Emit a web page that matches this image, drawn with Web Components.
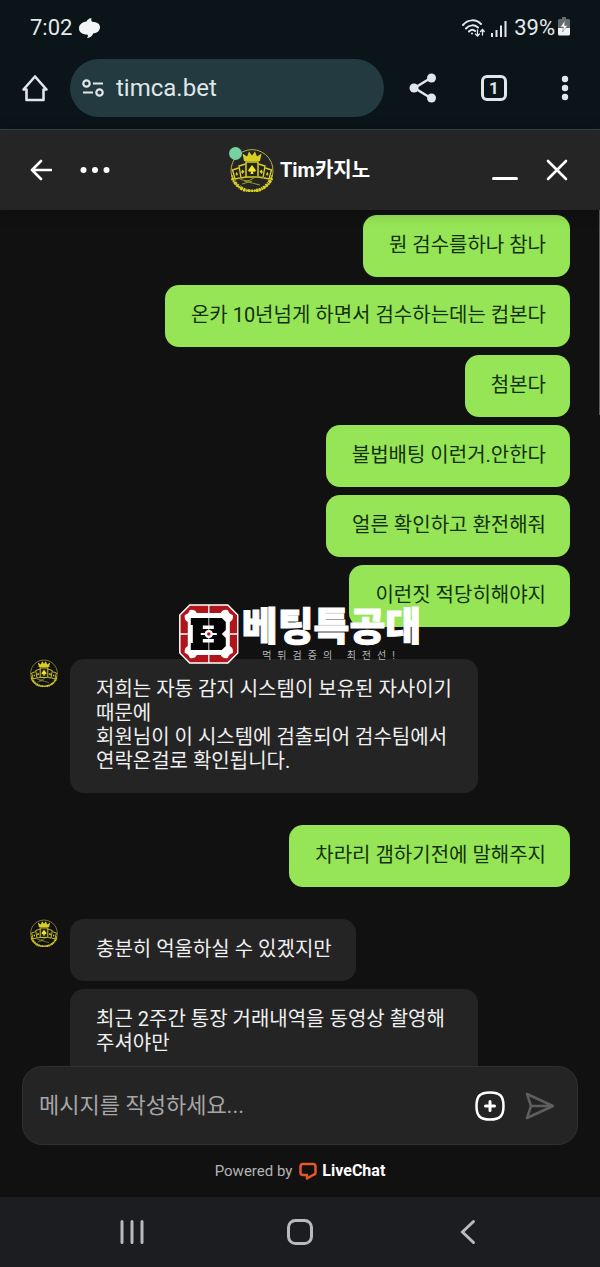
<!DOCTYPE html>
<html lang="ko">
<head>
<meta charset="utf-8">
<meta name="viewport" content="width=device-width, initial-scale=1">
<title>Tim카지노</title>
<style>
  body {
    margin: 0;
    background: #111111;
    font-family: Roboto, "Noto Sans CJK KR", sans-serif;
  }
</style>
</head>
<body>

<phone-screen>
  <status-bar slot="top" time="7:02" battery="39%"></status-bar>
  <browser-bar slot="top" url="timca.bet" tabs="1"></browser-bar>

  <chat-header slot="top">Tim카지노</chat-header>

  <chat-log>
    <chat-group from="me">
      <chat-bubble from="me">뭔 검수를하나 참나</chat-bubble>
      <chat-bubble from="me">온카 10년넘게 하면서 검수하는데는 컵본다</chat-bubble>
      <chat-bubble from="me">첨본다</chat-bubble>
      <chat-bubble from="me">불법배팅 이런거.안한다</chat-bubble>
      <chat-bubble from="me">얼른 확인하고 환전해줘</chat-bubble>
      <chat-bubble from="me">이런짓 적당히해야지</chat-bubble>
    </chat-group>
    <chat-group from="agent">
      <chat-bubble>저희는 자동 감지 시스템이 보유된 자사이기 때문에<br>회원님이 이 시스템에 검출되어 검수팀에서 연락온걸로 확인됩니다.</chat-bubble>
    </chat-group>
    <chat-group from="me">
      <chat-bubble from="me">차라리 갬하기전에 말해주지</chat-bubble>
    </chat-group>
    <chat-group from="agent">
      <chat-bubble>충분히 억울하실 수 있겠지만</chat-bubble>
      <chat-bubble>최근 2주간 통장 거래내역을 동영상 촬영해주셔야만<br>&nbsp;</chat-bubble>
    </chat-group>
    <site-stamp slot="overlay">
      베팅특공대
      <span slot="tagline">먹튀검증의 최전선!</span>
    </site-stamp>
  </chat-log>

  <chat-composer slot="bottom" placeholder="메시지를 작성하세요..."></chat-composer>
  <powered-by slot="bottom"></powered-by>
  <nav-bar slot="bottom"></nav-bar>
</phone-screen>

<script>
// shared bits for every icon button
const buttonCss = `
  button {
    display: flex;
    align-items: center;
    justify-content: center;
    padding: 0;
    border: 0;
    background: none;
    color: inherit;
    font: inherit;
  }
  svg { display: block; }
`

class BaseElement extends HTMLElement {
  constructor() {
    super();
    this.attachShadow({ mode: 'open' })
  }
  connectedCallback() {
    this.shadowRoot.innerHTML = this.tmpl()
  }
}

// column: bars on top, log in the middle, composer and nav below
class PhoneScreen extends BaseElement {
  tmpl() {
    return `
    <style>
      :host {
        display: flex;
        flex-direction: column;
        height: 100vh;
      }
      main {
        flex: 1;
        min-height: 0;
        display: flex;
      }
    </style>
    <slot name="top"></slot>
    <main><slot></slot></main>
    <slot name="bottom"></slot>
    `
  }
}

class StatusBar extends BaseElement {
  tmpl() {
    return `
    <style>
      :host {
        display: flex;
        justify-content: space-between;
        align-items: center;
        height: 56px;
        padding: 0 30px;
        background: #0b1418;
        color: #e3e9ea;
        font-size: 22px;
        line-height: 24px;
      }
      div {
        display: flex;
        align-items: center;
        gap: 7px;
      }
      .right { gap: 5px; }
      .battery { display: flex; gap: 3px; margin-left: 2px; }
      svg { display: block; }
    </style>
    <div>
      <span>${this.getAttribute('time')}</span>
      <svg width="21" height="20" viewBox="0 0 21 20" fill="#f4f6f6">
        <path d="M12.500 0C9.500 .5 8 2 7.500 3.500C3 4 0 6.500 0 10.500C0 14 3 16.500 8 16.500C9.500 17 9 19 8 20C11.500 19.500 13.500 18 14 15.500C18.500 15 21 12.500 21 9C21 6 18 4 13.500 3.800C12 3.500 12 1.500 12.500 0Z"/>
      </svg>
    </div>
    <div class="right">
      <svg width="23" height="18" viewBox="0 0 23 18" fill="none" stroke="#e3e9ea" stroke-width="2" stroke-linecap="round">
        <path d="M1 6C6 0 14 0 19 5M4 9.500C7.500 5.500 12.500 5.500 16 8.500M7 12.500C9 10.500 11.500 10.500 13 12"/>
        <circle cx="10" cy="14.500" r="1" fill="#e3e9ea" stroke="none"/>
        <path d="M15.500 11V16.500M13.500 15L15.500 17L17.500 15M20.500 16V11M18.500 12.500L20.500 10.500L22.200 12.500" stroke-width="1.300"/>
      </svg>
      <svg width="17" height="18" viewBox="0 0 17 18" stroke="#e3e9ea" stroke-width="2">
        <path d="M2 18V14M6.500 18V11M11 18V6.500M15.500 18V2"/>
      </svg>
      <span class="battery">
        <span>${this.getAttribute('battery')}</span>
        <svg width="12" height="20" viewBox="0 0 12 20">
          <path d="M4 1H8V3H10.500Q12 3 12 4.500V12H0V4.500Q0 3 1.500 3H4Z" fill="#646b6e"/>
          <path d="M0 12H12V18Q12 19.500 10.500 19.500H1.500Q0 19.500 0 18Z" fill="#f1f3f3"/>
          <path d="M7 4.500L2.500 11H5.500L4.500 16L9.500 9.500H6.500Z" fill="#fff" stroke="#646b6e" stroke-width=".5"/>
        </svg>
      </span>
    </div>
    `
  }
}

class BrowserBar extends BaseElement {
  tmpl() {
    return `
    <style>
      ${buttonCss}
      :host {
        display: flex;
        align-items: center;
        padding: 3px 20px 12px;
        border-bottom: 1px solid #38464a;
        background: #0b1418;
        color: #dfe7e8;
      }
      button { width: 30px; height: 30px; }
      .address {
        flex: 1;
        display: flex;
        align-items: center;
        gap: 12px;
        box-sizing: border-box;
        height: 58px;
        min-width: 0;
        margin: 0 24px 0 20px;
        padding: 0 12px;
        border-radius: 29px;
        background: #233a40;
      }
      input {
        flex: 1;
        min-width: 0;
        padding: 0;
        border: 0;
        outline: 0;
        background: none;
        color: #dfe7e8;
        font: 24px/32px Roboto, sans-serif;
      }
      .actions {
        display: flex;
        gap: 41px;
      }
      .tab {
        box-sizing: border-box;
        width: 26px;
        height: 26px;
        border: 3px solid #dfe7e8;
        border-radius: 6px;
        font-size: 17px;
        font-weight: 700;
        line-height: 20px;
      }
    </style>
    <button aria-label="Home">
      <svg width="28" height="28" viewBox="0 0 28 28" fill="none" stroke="currentColor" stroke-width="2.600" stroke-linejoin="round" stroke-linecap="round">
        <path d="M2.500 15.500L14 2.500L25.500 15.500H22.500V26H5.500V15.500Z"/>
      </svg>
    </button>
    <label class="address">
      <svg width="22" height="18" viewBox="0 0 22 18" fill="none" stroke="currentColor" stroke-width="2.200">
        <circle cx="4.500" cy="4.500" r="3.200"/>
        <circle cx="17.500" cy="13.500" r="3.200"/>
        <path d="M11 4.500H21M1 13.500H11"/>
      </svg>
      <input type="text" aria-label="Address" value="${this.getAttribute('url')}">
    </label>
    <div class="actions">
      <button aria-label="Share">
        <svg width="28" height="30" viewBox="0 0 28 30" fill="currentColor">
          <path d="M22.500 4.500L5.500 15L22.500 25.500" fill="none" stroke="currentColor" stroke-width="2.500"/>
          <circle cx="22.500" cy="5" r="4.500"/>
          <circle cx="5" cy="15" r="4.500"/>
          <circle cx="22.500" cy="25" r="4.500"/>
        </svg>
      </button>
      <button aria-label="Tabs"><span class="tab">${this.getAttribute('tabs')}</span></button>
      <button aria-label="Menu">
        <svg width="8" height="26" viewBox="0 0 8 26" fill="currentColor">
          <circle cx="4" cy="4" r="3.200"/>
          <circle cx="4" cy="13" r="3.200"/>
          <circle cx="4" cy="22" r="3.200"/>
        </svg>
      </button>
    </div>
    `
  }
}

// round casino emblem, sized by its host
class CasinoLogo extends BaseElement {
  tmpl() {
    return `
    <style>
      :host { display: block; }
      svg { display: block; width: 100%; height: 100%; }
    </style>
    <svg viewBox="0 0 44 44" fill="none" stroke="#d8cf25">
      <path d="M2 29A21 21 0 1 1 42 29" stroke-width="1" stroke="#b5b04c"/>
      <path d="M2.500 30A21 21 0 0 0 41.500 30" stroke-width="3.500" stroke-dasharray="2 1 1 .7 2.500 .8"/>
      <path d="M2 27A20 16 0 0 0 42 27" stroke-width="1.200"/>
      <path d="M14 13L12.500 5.500L17 8.500L19 3.500L22 7.500L25 3.500L27 8.500L31.500 5.500L30 13Z" fill="#d8cf25" stroke="none"/>
      <path d="M16 14H28V29H16Z" stroke-width="1.500" fill="#252518"/>
      <path d="M15.500 16L9 18L11 30L16 29M28.500 16L35 18L33 30L28 29M8.500 20L2.500 22L5 31L10 30M35.500 20L41.500 22L39 31L34 30" stroke-width="1.400"/>
      <path d="M22 17L26 22.500Q25 24.500 22.800 23.500L23.500 26H20.500L21.200 23.500Q19 24.500 18 22.500Z" fill="#f0e62a" stroke="none"/>
      <path d="M12.500 21.500L14.500 23.500L12.500 26L11 24ZM31.500 21.500L29.500 23.500L31.500 26L33 24ZM6.500 24L8 26L7 28L5.500 26ZM37.500 24L36 26L37 28L38.500 26Z" fill="#d8cf25" stroke="none"/>
      <path d="M8 30Q17 35 22 31T36 30M14 33L30 37M12 36L22 33" stroke-width="1" stroke="#9b9630"/>
    </svg>
    `
  }
}

class ChatHeader extends BaseElement {
  tmpl() {
    return `
    <style>
      ${buttonCss}
      :host {
        position: relative;
        z-index: 1;
        display: grid;
        grid-template-columns: 1fr auto 1fr;
        align-items: center;
        height: 80px;
        padding: 0 30px;
        background: #252525;
        color: #ffffff;
        box-shadow: 0 2px 14px rgba(0, 0, 0, .25);
      }
      nav { display: flex; gap: 28px; }
      nav.end { justify-content: flex-end; }
      .brand {
        display: flex;
        align-items: center;
        gap: 6px;
      }
      .avatar { position: relative; }
      casino-logo { width: 44px; height: 44px; }
      .online {
        position: absolute;
        top: -1px;
        left: -1px;
        width: 13px;
        height: 13px;
        border-radius: 50%;
        background: #74d3a0;
      }
      h1 {
        margin: 0;
        font-size: 20px;
        font-weight: 700;
        line-height: 24px;
      }
    </style>
    <nav>
      <button aria-label="Back">
        <svg width="22" height="22" viewBox="0 0 22 22" fill="none" stroke="currentColor" stroke-width="2.600" stroke-linecap="round" stroke-linejoin="round">
          <path d="M11 2L2 11L11 20M2 11H21"/>
        </svg>
      </button>
      <button aria-label="More">
        <svg width="30" height="8" viewBox="0 0 30 8" fill="currentColor">
          <circle cx="3.500" cy="4" r="3"/>
          <circle cx="15" cy="4" r="3"/>
          <circle cx="26.500" cy="4" r="3"/>
        </svg>
      </button>
    </nav>
    <div class="brand">
      <div class="avatar">
        <casino-logo></casino-logo>
        <span class="online"></span>
      </div>
      <h1><slot></slot></h1>
    </div>
    <nav class="end">
      <button aria-label="Minimize">
        <svg width="26" height="22" viewBox="0 0 26 22" stroke="currentColor" stroke-width="3" stroke-linecap="round">
          <path d="M1.500 19.500H24.500"/>
        </svg>
      </button>
      <button aria-label="Close">
        <svg width="24" height="22" viewBox="0 0 24 22" stroke="currentColor" stroke-width="2.600" stroke-linecap="round">
          <path d="M2 2L20 20M20 2L2 20"/>
        </svg>
      </button>
    </nav>
    `
  }
}

class ChatLog extends BaseElement {
  tmpl() {
    return `
    <style>
      :host {
        position: relative;
        flex: 1;
        min-width: 0;
        display: flex;
        flex-direction: column;
        gap: 32px;
        padding: 5px 30px 0;
        overflow: hidden;
        background: #111111;
      }
      .scroll {
        position: absolute;
        top: 0;
        right: 0;
        width: 1px;
        height: 24%;
        background: #5c5c5c;
      }
    </style>
    <slot></slot>
    <slot name="overlay"></slot>
    <div class="scroll"></div>
    `
  }
}

// consecutive bubbles of one sender, the agent's with an avatar at the left
class ChatGroup extends BaseElement {
  tmpl() {
    let agent = this.getAttribute('from') == 'agent'
    return `
    <style>
      :host {
        display: flex;
        flex-shrink: 0;
        gap: 12px;
      }
      casino-logo { width: 28px; height: 28px; }
      .list {
        flex: 1;
        min-width: 0;
        display: flex;
        flex-direction: column;
        gap: 8px;
        align-items: ${agent ? 'flex-start' : 'flex-end'};
      }
    </style>
    ${agent ? '<casino-logo></casino-logo>' : ''}
    <div class="list"><slot></slot></div>
    `
  }
}

class ChatBubble extends BaseElement {
  tmpl() {
    return `
    <style>
      :host {
        display: block;
        box-sizing: border-box;
        max-width: 408px;
        padding: 18px 24px 20px 26px;
        border-radius: 14px;
        background: #242424;
        color: #f0f0f0;
        font-size: 20px;
        line-height: 24px;
      }
      :host([from="me"]) {
        background: #95e556;
        color: #14300c;
      }
    </style>
    <slot></slot>
    `
  }
}

// brand stamp laid over the conversation
class SiteStamp extends BaseElement {
  tmpl() {
    return `
    <style>
      :host {
        position: absolute;
        top: 394px;
        left: 50%;
        transform: translateX(-50%);
        display: flex;
        gap: 3px;
        color: #ffffff;
        white-space: nowrap;
      }
      svg { display: block; }
      .name {
        font-size: 39px;
        font-weight: 900;
        line-height: 46px;
        -webkit-text-stroke: 1px #ffffff;
      }
      .tagline {
        font-size: 10px;
        line-height: 12px;
        letter-spacing: 6px;
        text-align: center;
        color: #b8b8b8;
      }
    </style>
    <svg width="60" height="60" viewBox="0 0 60 60">
      <path d="M11 1H49L59 11V49L49 59H11L1 49V11Z" fill="#b0151b" stroke="#fff" stroke-width="1.500"/>
      <path d="M11 6Q16 5 18 9H42Q44 5 49 6Q50 10 54 11Q55 16 51 18V42Q55 44 54 49Q50 50 49 54Q44 55 42 51H18Q16 55 11 54Q10 50 6 49Q5 44 9 42V18Q5 16 6 11Q10 10 11 6Z" fill="#fff"/>
      <path d="M30 1V59M1 30H9M51 30H59" stroke="#fff" stroke-width="1.300"/>
      <path d="M12 14H43L47 18V26L43 30L47 34V42L43 46H12V39H14V21H12Z" fill="#050505"/>
      <path d="M24 21.500H35V25H24ZM24 35H35V38.500H24Z" fill="#fff"/>
      <path d="M30 14V46" stroke="#fff" stroke-width=".8"/>
      <path d="M22 30H38" stroke="#fff" stroke-width="2"/>
      <circle cx="30" cy="30" r="4" fill="#fff"/>
      <circle cx="30" cy="30" r="1.800" fill="#c8151b"/>
    </svg>
    <div>
      <div class="name"><slot></slot></div>
      <div class="tagline"><slot name="tagline"></slot></div>
    </div>
    `
  }
}

class ChatComposer extends BaseElement {
  tmpl() {
    return `
    <style>
      ${buttonCss}
      :host {
        display: block;
        padding: 0 22px;
        background: #111111;
      }
      form {
        display: flex;
        align-items: center;
        gap: 20px;
        box-sizing: border-box;
        height: 79px;
        margin: 0;
        padding: 0 22px 0 16px;
        border: 1px solid #303030;
        border-radius: 20px;
        background: #242424;
      }
      input {
        flex: 1;
        min-width: 0;
        padding: 0;
        border: 0;
        outline: 0;
        background: none;
        color: #ffffff;
        font-family: Roboto, "Noto Sans CJK KR", sans-serif;
        font-size: 22px;
        line-height: 32px;
      }
      input::placeholder { color: #a6a6a6; opacity: 1; }
      .add { color: #ffffff; }
      .send { color: #5e5e5e; }
    </style>
    <form>
      <input type="text" aria-label="Message" placeholder="${this.getAttribute('placeholder')}">
      <button type="button" class="add" aria-label="Add">
        <svg width="30" height="30" viewBox="0 0 30 30" fill="none" stroke="currentColor" stroke-width="2.500" stroke-linecap="round">
          <path d="M15 1.500C25 1.500 28.500 5 28.500 15C28.500 25 25 28.500 15 28.500C5 28.500 1.500 25 1.500 15C1.500 5 5 1.500 15 1.500Z"/>
          <path d="M15 10.500V19.500M10.500 15H19.500" stroke-width="3"/>
        </svg>
      </button>
      <button type="submit" class="send" aria-label="Send">
        <svg width="30" height="28" viewBox="0 0 30 28" fill="none" stroke="currentColor" stroke-width="2.500" stroke-linejoin="round" stroke-linecap="round">
          <path d="M2 2L28 14L2 26L6 14ZM6 14H27"/>
        </svg>
      </button>
    </form>
    `
  }
}

class PoweredBy extends BaseElement {
  tmpl() {
    return `
    <style>
      :host {
        display: flex;
        align-items: center;
        justify-content: center;
        gap: 7px;
        height: 52px;
        background: #111111;
        color: #b4b4b4;
        font-size: 15px;
        line-height: 20px;
      }
      a {
        display: flex;
        align-items: center;
        gap: 5px;
        color: #ffffff;
        font-size: 16px;
        font-weight: 700;
        text-decoration: none;
      }
    </style>
    <span>Powered by</span>
    <a href="#livechat">
      <svg width="18" height="18" viewBox="0 0 18 18" fill="none" stroke="#e8572a" stroke-width="2.500" stroke-linejoin="round">
        <path d="M4 2H14Q16.500 2 16.500 4.500V10.500Q16.500 12.500 14 13L8 16.500V13H4Q1.500 13 1.500 10.500V4.500Q1.500 2 4 2Z"/>
      </svg>
      <span>LiveChat</span>
    </a>
    `
  }
}

class NavBar extends BaseElement {
  tmpl() {
    return `
    <style>
      ${buttonCss}
      :host {
        display: grid;
        grid-template-columns: repeat(3, 1fr);
        height: 70px;
        padding: 0 8%;
        background: #1c1d21;
        color: #b9babd;
      }
    </style>
    <button aria-label="Recents">
      <svg width="26" height="26" viewBox="0 0 26 26" stroke="currentColor" stroke-width="3" stroke-linecap="round">
        <path d="M3 2.500V23.500M13 2.500V23.500M23 2.500V23.500"/>
      </svg>
    </button>
    <button aria-label="Home">
      <svg width="28" height="28" viewBox="0 0 28 28" fill="none" stroke="currentColor" stroke-width="3">
        <rect x="2.500" y="2.500" width="23" height="23" rx="7"/>
      </svg>
    </button>
    <button aria-label="Back">
      <svg width="16" height="26" viewBox="0 0 16 26" fill="none" stroke="currentColor" stroke-width="3" stroke-linecap="round">
        <path d="M13.500 2.500L2.500 13L13.500 23.500"/>
      </svg>
    </button>
    `
  }
}

customElements.define('phone-screen', PhoneScreen);
customElements.define('status-bar', StatusBar);
customElements.define('browser-bar', BrowserBar);
customElements.define('casino-logo', CasinoLogo);
customElements.define('chat-header', ChatHeader);
customElements.define('chat-log', ChatLog);
customElements.define('chat-group', ChatGroup);
customElements.define('chat-bubble', ChatBubble);
customElements.define('site-stamp', SiteStamp);
customElements.define('chat-composer', ChatComposer);
customElements.define('powered-by', PoweredBy);
customElements.define('nav-bar', NavBar);
</script>
</body>
</html>
